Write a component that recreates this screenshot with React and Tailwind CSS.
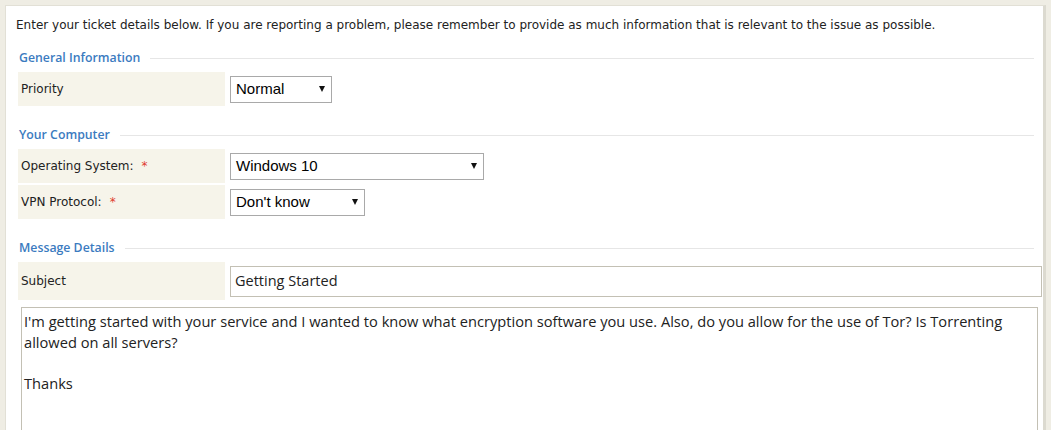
function Caret() {
  return (
    <svg width="6" height="6" viewBox="0 0 6 6" className="shrink-0">
      <polygon points="0,0 6,0 3,6" fill="#111" />
    </svg>
  )
}

function Select({ value, width }) {
  return (
    <div
      className={`flex h-[27px] items-center justify-between border border-[#a9a9a9] bg-white pl-[5px] pr-[6px] text-[15px] text-black ${width}`}
      style={{ fontFamily: '"Liberation Sans", Arial, sans-serif' }}
    >
      <span>{value}</span>
      <Caret />
    </div>
  )
}

function Heading({ children, className = "" }) {
  return (
    <div className={`flex h-4 items-center pr-[8px] ${className}`}>
      <span
        className="pl-px text-[12.3px] font-semibold text-[#3b7bbf]"
        style={{ fontFamily: '"Open Sans", "Noto Sans", sans-serif' }}
      >
        {children}
      </span>
      <div className="ml-[10px] h-px flex-1 bg-[#e6e6e6]" />
    </div>
  )
}

function Row({ label, required, height = "h-[34px]", children }) {
  return (
    <div className={`flex ${height} items-center`}>
      <div className="flex h-full w-[207px] shrink-0 items-center bg-[#f6f4ea] pl-[3px] text-[12px] text-[#222]">
        <span>{label}</span>
        {required ? <span className="ml-[8px] text-[#e03b2f]">*</span> : null}
      </div>
      <div className="ml-[5px] flex flex-1 items-center">{children}</div>
    </div>
  )
}

export default function App() {
  return (
    <div
      className="h-[430px] overflow-hidden bg-[#efede4] pl-[5px] pr-[5px] pt-[5px]"
      style={{ fontFamily: '"DejaVu Sans", Verdana, sans-serif' }}
    >
      <div className="h-[440px] border-l border-t border-r-[3px] border-[#e2e0d6] border-r-[#dcdad0] bg-white pl-[12px] pr-px pt-[11px]">
        <p className="-ml-[2px] h-4 text-[12px] leading-4 text-[#222]">
          Enter your ticket details below. If you are reporting a problem, please remember to provide as much information that is relevant to the issue as possible.
        </p>

        <Heading className="mt-[17px]">General Information</Heading>
        <div className="mt-[6px]">
          <Row label="Priority">
            <Select value="Normal" width="w-[102px]" />
          </Row>
        </div>

        <Heading className="mt-[21px]">Your Computer</Heading>
        <div className="mt-[6px] flex flex-col gap-[2px]">
          <Row label="Operating System:" required>
            <Select value="Windows 10" width="w-[254px]" />
          </Row>
          <Row label="VPN Protocol:" required>
            <Select value="Don't know" width="w-[135px]" />
          </Row>
        </div>

        <Heading className="mt-[21px]">Message Details</Heading>
        <div className="mt-[6px]">
          <Row label="Subject" height="h-[38px]">
            <div
              className="flex h-[31px] w-full items-center border border-[#c3c0b4] pl-[4px] text-[14.5px] text-[#222]"
              style={{ fontFamily: '"Open Sans", "Noto Sans", sans-serif' }}
            >
              Getting Started
            </div>
          </Row>
        </div>

        <div
          className="ml-[3px] mr-[4px] mt-[7px] h-[140px] border border-[#c3c0b4] px-[2px] pt-[3px] text-[14.65px] leading-[20.5px] text-[#222]"
          style={{ fontFamily: '"Open Sans", "Noto Sans", sans-serif' }}
        >
          <p>I'm getting started with your service and I wanted to know what encryption software you use. Also, do you allow for the use of Tor? Is Torrenting allowed on all servers?</p>
          <p className="mt-[20.5px]">Thanks</p>
        </div>
      </div>
    </div>
  )
}
